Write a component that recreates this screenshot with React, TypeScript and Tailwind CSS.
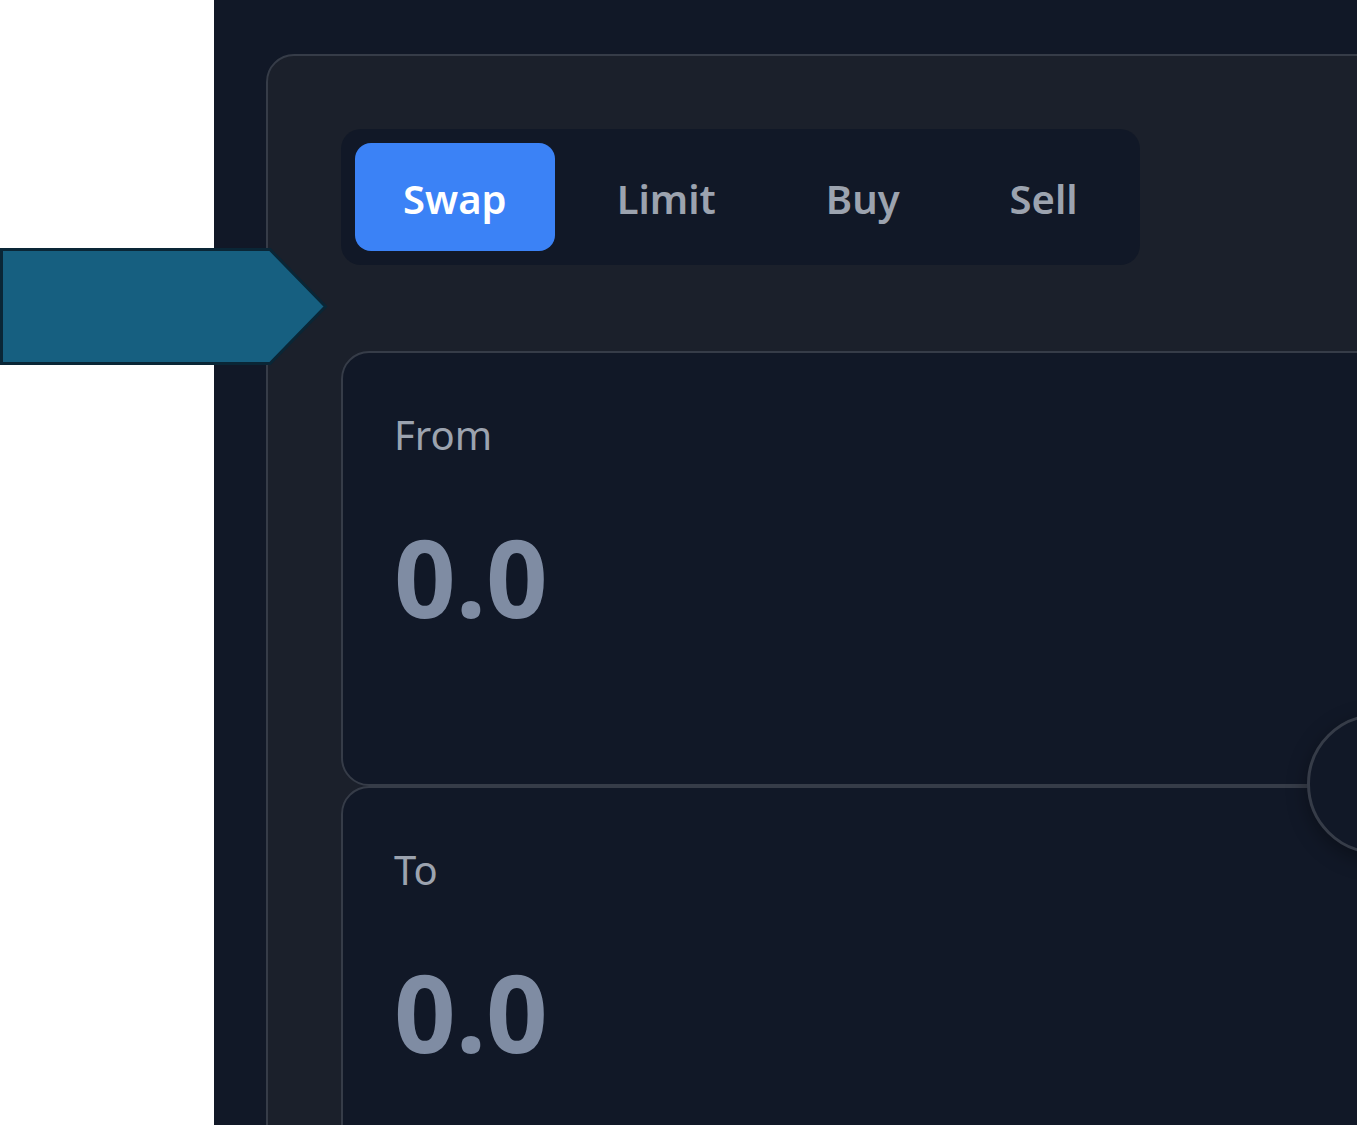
import { ReactNode } from 'react';

const TABS = ['Swap', 'Limit', 'Buy', 'Sell'];

function TokenPanel({ label, children }: { label: string; children?: ReactNode }) {
  return (
    <div className="relative h-[435px] w-[1200px] rounded-[28px] border-2 border-[#363c48] bg-[#111827] pl-[51px] pt-[52px]">
      <p className="text-[40px] leading-[60px] text-[#9ca3af]">{label}</p>
      <p className="mt-[58px] text-[108px] font-bold leading-none text-[#7f8ca3]">0.0</p>
      {children}
    </div>
  );
}

export default function App() {
  return (
    <div
      className="relative flex h-[1125px] w-[1357px] overflow-hidden bg-white"
      style={{ fontFamily: '"Noto Sans", "Open Sans", sans-serif' }}
    >
      {/* white gutter */}
      <div className="w-[214px] shrink-0 bg-white" />

      {/* app area */}
      <div className="flex-1 bg-[#111827] pl-[52px] pt-[54px]">
        <div className="w-[1300px] min-h-[1200px] rounded-[28px] border-2 border-[#363c48] bg-[#1b202b] pl-[73px] pt-[73px]">
          {/* tab switcher */}
          <div className="inline-flex gap-[14px] rounded-[20px] bg-[#111827] p-[14px]">
            {TABS.map((tab, i) => (
              <button
                key={tab}
                className={
                  i === 0
                    ? 'h-[108px] rounded-[16px] bg-[#3b82f6] px-[48px] pt-[4px] text-[40px] font-semibold text-white'
                    : 'h-[108px] rounded-[16px] px-[48px] pt-[4px] text-[40px] font-semibold text-[#9ca3af]'
                }
              >
                {tab}
              </button>
            ))}
          </div>

          {/* from / to */}
          <div className="relative mt-[86px] flex flex-col">
            <TokenPanel label="From" />
            <TokenPanel label="To" />
            {/* flip button */}
            <div className="absolute left-[966px] top-[363px] h-[140px] w-[140px] rounded-full border-[3px] border-[#363c48] bg-[#111827] shadow-[0_6px_20px_rgba(0,0,0,0.35)]" />
          </div>
        </div>
      </div>

      {/* callout arrow */}
      <svg className="absolute left-0 top-[248px]" width="328" height="117" viewBox="0 0 328 117">
        <polygon
          points="1.5,1.5 270,1.5 325.5,58.5 270,115.5 1.5,115.5"
          fill="#165f80"
          stroke="#0a2636"
          strokeWidth="3"
        />
      </svg>
    </div>
  );
}
